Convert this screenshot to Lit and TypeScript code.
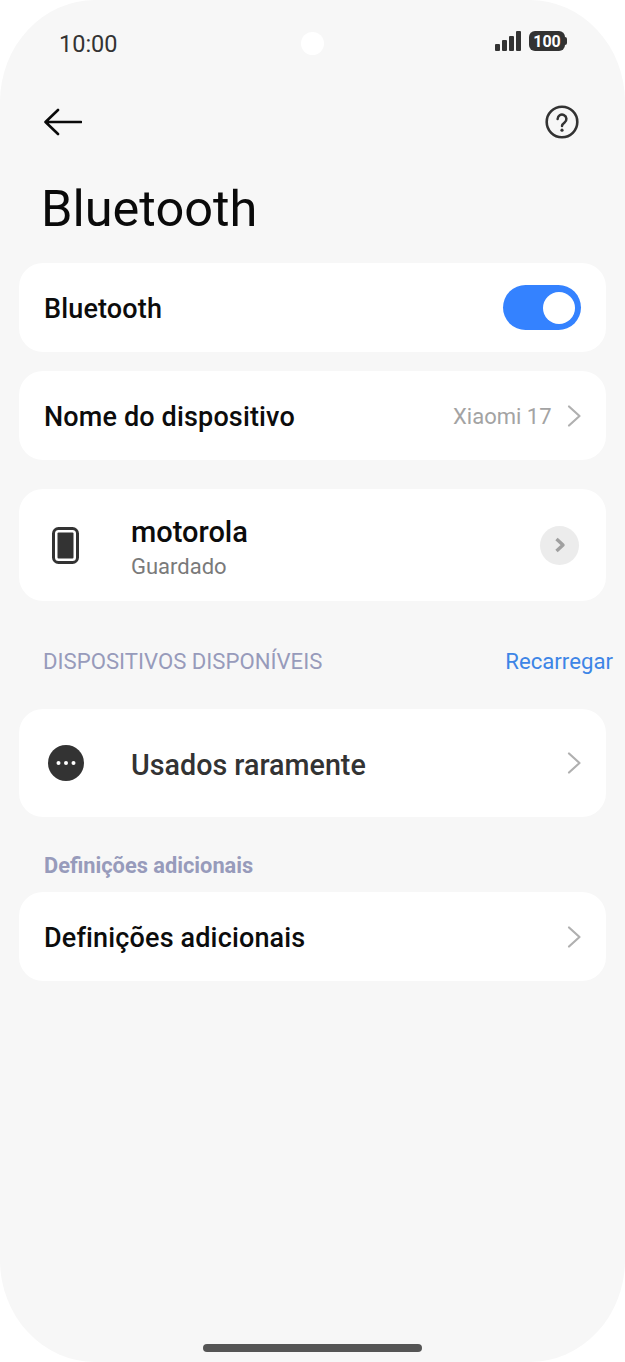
import { LitElement, html, css } from "lit";
import { customElement } from "lit/decorators.js";

const chevron = html`<svg class="chev" width="16" height="24" viewBox="0 0 16 24"><path d="M3 2.5 L13.5 12 L3 21.5" fill="none" stroke="#b0b0b0" stroke-width="2.2" stroke-linecap="round" stroke-linejoin="round"/></svg>`;

@customElement("app-root")
export class AppRoot extends LitElement {
  static styles = css`
    :host { display: block; width: 625px; height: 1362px; background: #fff; font-family: Roboto, "Liberation Sans", sans-serif; overflow: hidden; }
    * { box-sizing: border-box; }
    .screen { position: relative; width: 625px; height: 1362px; background: #f7f7f7; border-radius: 95px / 102px; padding: 0 19px; display: flex; flex-direction: column; }
    .status { height: 87px; margin: 0 -19px; padding: 0 58px 0 59px; display: grid; grid-template-columns: 1fr 23px 1fr; align-items: center; color: #333; font-size: 23.5px; }
    .status > span:first-child { margin-top: 1px; }
    .camera { width: 23px; height: 23px; border-radius: 50%; background: #fff; margin-left: -1px; }
    .status-r { display: flex; align-items: center; justify-content: flex-end; gap: 8px; margin-bottom: 5px; }
    .battery { display: flex; align-items: center; }
    .batt-body { width: 36px; height: 20px; border-radius: 6px; background: #333; color: #fff; font-size: 16px; font-weight: 700; display: flex; align-items: center; justify-content: center; line-height: 20px; padding-top: 1px; }
    .batt-tip { width: 2px; height: 8px; background: #333; border-radius: 0 2px 2px 0; }
    .nav { height: 70px; margin: 0 -19px; padding: 0 46px 0 44px; display: flex; align-items: center; justify-content: space-between; }
    h1 { margin: 0; height: 106px; padding: 23px 0 0 22px; font-size: 50.5px; line-height: 58px; font-weight: 400; color: #0a0a0a; }
    .card { background: #fff; border-radius: 24px; padding: 0 25px; display: flex; align-items: center; margin-bottom: 19px; }
    .h89 { height: 89px; }
    .label { font-size: 27px; letter-spacing: 0.15px; font-weight: 500; color: #0c0c0c; flex: 1; padding-top: 2px; }
    .toggle { width: 78px; height: 45px; border-radius: 23px; background: #3482ff; display: flex; align-items: center; justify-content: flex-end; padding-right: 6px; }
    .knob { width: 32px; height: 32px; border-radius: 50%; background: #fff; }
    .value { font-size: 22px; color: #a3a3a3; margin-right: 14px; margin-left: 1px; padding-top: 2px; }
    .chev { margin-right: -0.5px; }
    .device { height: 112px; margin-top: 10px; margin-bottom: 0; }
    .icon-slot { width: 87px; display: flex; align-items: center; }
    .phone { margin-left: 8px; }
    .dots { margin-left: 4px; }
    .grow { flex: 1; display: flex; flex-direction: column; padding-top: 6px; }
    .dev-name { font-size: 29px; font-weight: 500; color: #0c0c0c; line-height: 36px; }
    .dev-sub { font-size: 22px; color: #7a7a7a; line-height: 33px; }
    .info { width: 39px; height: 39px; border-radius: 50%; background: #ececec; display: flex; align-items: center; justify-content: center; margin-right: 2px; }
    .section { height: 108px; margin: 0 -19px 0 -19px; padding: 11px 12px 0 43px; display: flex; align-items: center; justify-content: space-between; }
    .sec-title { font-size: 22.15px; color: #979bbb; }
    .reload { font-size: 22.2px; color: #3d85e6; margin-top: 1px; }
    .rare { height: 108px; margin-bottom: 0; }
    .rare .label { color: #333; font-size: 28.7px; letter-spacing: 0; padding-top: 3px; }
    .sub { height: 75px; padding: 37px 0 0 25px; font-size: 21.8px; line-height: 24px; font-weight: 700; color: #979bbb; }
    .home { position: absolute; left: 203px; top: 1344px; width: 219px; height: 8px; border-radius: 4px; background: #555; }
  `;

  render() {
    return html`<div class="screen">
      <div class="status">
        <span>10:00</span>
        <span class="camera"></span>
        <div class="status-r">
          <svg width="26" height="20" viewBox="0 0 26 20"><g fill="#333"><rect x="0" y="13" width="5" height="7" rx="1"/><rect x="7" y="9" width="5" height="11" rx="1"/><rect x="14" y="5" width="5" height="15" rx="1"/><rect x="21" y="0" width="5" height="20" rx="1"/></g></svg>
          <div class="battery"><div class="batt-body">100</div><div class="batt-tip"></div></div>
        </div>
      </div>
      <div class="nav">
        <svg width="38" height="28" viewBox="0 0 38 28"><path d="M37 14 H2 M14 2 L1.5 14 L14 26" fill="none" stroke="#0a0a0a" stroke-width="2.6" stroke-linecap="round" stroke-linejoin="round"/></svg>
        <svg width="34" height="34" viewBox="0 0 34 34"><circle cx="17" cy="17" r="15.3" fill="none" stroke="#333" stroke-width="2.6"/><path d="M12.6 14 a4.4 4.4 0 1 1 7 3.5 c-1.7 1.2 -2.6 1.9 -2.6 3.6" fill="none" stroke="#333" stroke-width="2.5" stroke-linecap="round"/><circle cx="17" cy="25.2" r="1.6" fill="#333"/></svg>
      </div>
      <h1>Bluetooth</h1>
      <div class="card h89"><span class="label">Bluetooth</span><div class="toggle"><div class="knob"></div></div></div>
      <div class="card h89"><span class="label">Nome do dispositivo</span><span class="value">Xiaomi 17</span>${chevron}</div>
      <div class="card device">
        <div class="icon-slot"><svg class="phone" width="27" height="37" viewBox="0 0 27 37"><rect x="1.5" y="1.5" width="24" height="34" rx="5" fill="none" stroke="#333" stroke-width="3"/><rect x="5.5" y="5.5" width="16" height="26" rx="1" fill="#333"/></svg></div>
        <div class="grow"><span class="dev-name">motorola</span><span class="dev-sub">Guardado</span></div>
        <div class="info"><svg width="12" height="16" viewBox="0 0 12 16"><path d="M2.5 2 L9 8 L2.5 14" fill="none" stroke="#a0a0a0" stroke-width="3.4" stroke-linejoin="round"/></svg></div>
      </div>
      <div class="section"><span class="sec-title">DISPOSITIVOS DISPONÍVEIS</span><span class="reload">Recarregar</span></div>
      <div class="card rare">
        <div class="icon-slot"><svg class="dots" width="36" height="36" viewBox="0 0 36 36"><circle cx="18" cy="18" r="18" fill="#333"/><g fill="#fff"><circle cx="10.5" cy="18" r="2"/><circle cx="18" cy="18" r="2"/><circle cx="25.5" cy="18" r="2"/></g></svg></div>
        <span class="label">Usados raramente</span>${chevron}
      </div>
      <div class="sub">Definições adicionais</div>
      <div class="card h89"><span class="label">Definições adicionais</span>${chevron}</div>
      <div class="home"></div>
    </div>`;
  }
}
